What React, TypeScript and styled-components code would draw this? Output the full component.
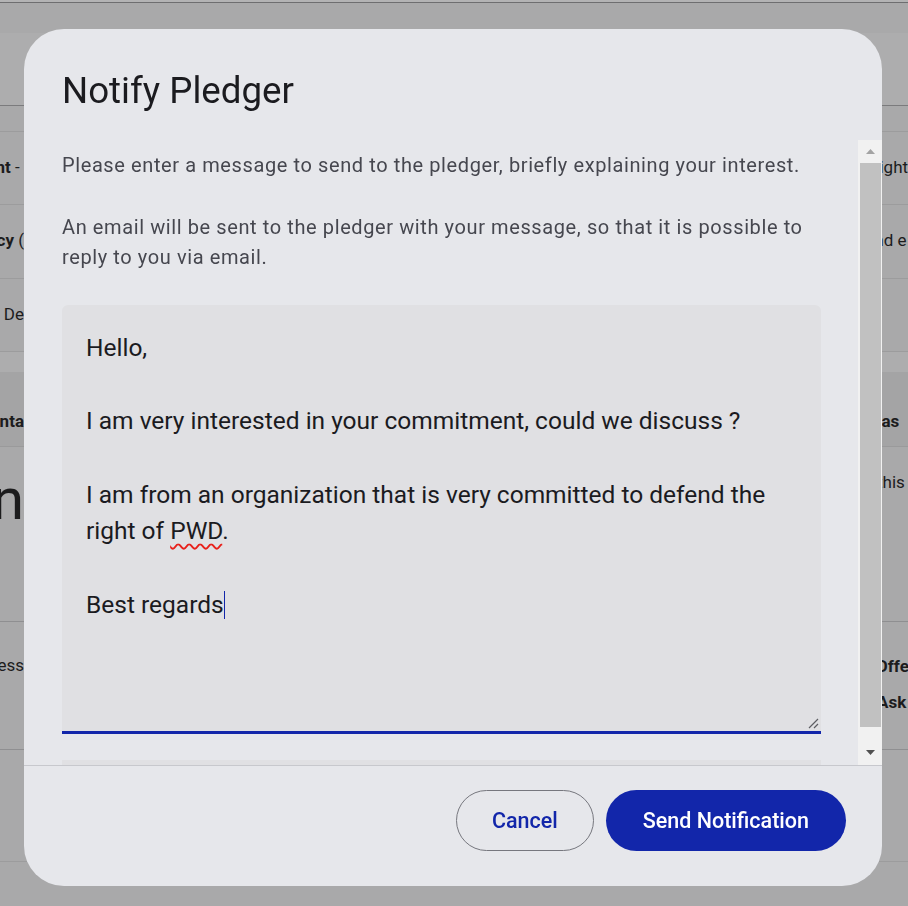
import styled, { createGlobalStyle } from 'styled-components';

const GlobalStyle = createGlobalStyle`
  html, body {
    margin: 0;
    padding: 0;
    background: #a9a9aa;
    font-family: Roboto, "Liberation Sans", sans-serif;
    overflow: hidden;
  }
`;

// ---- page behind the dialog (dimmed) ----

const Page = styled.div`
  width: 908px;
  height: 906px;
  display: flex;
  flex-direction: column;
  background: #a9a9aa;
  color: #1c1c1d;
`;

const TopLine = styled.div`
  height: 2px;
  background: #b3b3b4;
  border-bottom: 1px solid #6e6e70;
`;

const Band = styled.div<{ h: number; bg?: string; line?: string }>`
  height: ${(p) => p.h}px;
  flex: none;
  background: ${(p) => p.bg || 'transparent'};
  border-bottom: ${(p) => (p.line ? `1px solid ${p.line}` : 'none')};
  display: grid;
  grid-template-columns: 24px 1fr 40px;
`;

const LeftCell = styled.div<{ top: number }>`
  display: flex;
  justify-content: flex-end;
  overflow: hidden;
  white-space: nowrap;
  padding-top: ${(p) => p.top}px;
`;

const RightCell = styled.div<{ top: number }>`
  display: flex;
  flex-direction: column;
  overflow: hidden;
  white-space: nowrap;
  padding-top: ${(p) => p.top}px;
  gap: 14px;
`;

const CellText = styled.span<{ bold?: boolean; size?: number; shift?: number }>`
  font-size: ${(p) => p.size || 17}px;
  line-height: 22px;
  font-weight: ${(p) => (p.bold ? 700 : 400)};
  margin-left: ${(p) => p.shift || 0}px;
`;

// ---- dialog ----

const Overlay = styled.div`
  position: fixed;
  inset: 0;
  padding: 29px 0 0 24px;
`;

const Modal = styled.div`
  width: 858px;
  height: 857px;
  background: #e6e7eb;
  border-radius: 40px;
  display: flex;
  flex-direction: column;
  overflow: hidden;
`;

const Header = styled.div`
  height: 111px;
  flex: none;
  box-sizing: border-box;
  padding: 40px 38px 0;
`;

const Title = styled.h2`
  margin: 0;
  font-size: 36.7px;
  line-height: 44px;
  font-weight: 400;
  color: #1b1b1f;
`;

const Body = styled.div`
  height: 625px;
  flex: none;
  display: flex;
`;

const Content = styled.div`
  flex: 1;
  overflow: hidden;
  padding: 10px 37px 0 38px;
`;

const Paragraph = styled.p`
  margin: 0 0 32px;
  font-size: 20px;
  line-height: 30px;
  letter-spacing: 0.6px;
  color: #46474f;
`;

const MessageBox = styled.div`
  box-sizing: border-box;
  margin-top: 33px;
  height: 429px;
  background: #e0e0e3;
  border-radius: 6px 6px 0 0;
  border-bottom: 3px solid #1226aa;
  padding: 25px 25px 0 24px;
  position: relative;
  font-size: 24.5px;
  line-height: 36.7px;
  color: #1b1b1f;
`;

const MessageLine = styled.div`
  min-height: 36.7px;
  white-space: nowrap;
`;

const Misspelled = styled.span`
  text-decoration: underline wavy #e8201a;
  text-decoration-thickness: 1.5px;
  text-underline-offset: 4px;
`;

const Caret = styled.span`
  display: inline-block;
  width: 1px;
  height: 28px;
  vertical-align: -6px;
  background: #1226aa;
`;

const Grip = styled.svg`
  position: absolute;
  right: 2px;
  bottom: 2px;
`;

const NextField = styled.div`
  margin-top: 26px;
  height: 40px;
  background: #e0e0e3;
`;

const Scrollbar = styled.div`
  width: 24px;
  flex: none;
  background: #f1f1f1;
  display: flex;
  flex-direction: column;
`;

const ScrollArrow = styled.div<{ h: number }>`
  height: ${(p) => p.h}px;
  flex: none;
  display: flex;
  align-items: center;
  justify-content: center;
`;

const Track = styled.div`
  flex: 1;
  display: flex;
  padding: 0 1px 13px 2px;
`;

const Thumb = styled.div`
  flex: 1;
  background: #c1c1c1;
`;

const Footer = styled.div`
  flex: 1;
  border-top: 1px solid #c7c8cd;
  display: flex;
  justify-content: flex-end;
  align-items: flex-start;
  gap: 12px;
  padding: 24px 36px 0 0;
`;

const Button = styled.button<{ primary?: boolean }>`
  height: 61px;
  border-radius: 31px;
  font-family: Roboto, "Liberation Sans", sans-serif;
  font-size: 21.5px;
  font-weight: 500;
  cursor: pointer;
  padding: 0 ${(p) => (p.primary ? 37 : 35)}px;
  background: ${(p) => (p.primary ? '#1226aa' : 'transparent')};
  color: ${(p) => (p.primary ? '#ffffff' : '#1226aa')};
  border: ${(p) => (p.primary ? 'none' : '1px solid #76777e')};
`;

export default function App() {
  return (
    <>
      <GlobalStyle />
      <Page>
        <TopLine />
        <Band h={30} bg="#a9a9aa" />
        <Band h={72} bg="#adadae" line="#7b7b7d" />
        <Band h={25} line="#9c9c9d" />
        <Band h={72} line="#9c9c9d">
          <LeftCell top={24}>
            <CellText bold>Amount</CellText>
            <CellText>&nbsp;-&nbsp;</CellText>
          </LeftCell>
          <div />
          <RightCell top={24}>
            <CellText shift={1}>Right</CellText>
          </RightCell>
        </Band>
        <Band h={73} line="#9c9c9d">
          <LeftCell top={24}>
            <CellText bold>Currency</CellText>
            <CellText>&nbsp;(</CellText>
          </LeftCell>
          <div />
          <RightCell top={24}>
            <CellText shift={-3}>and e</CellText>
          </RightCell>
        </Band>
        <Band h={72} line="#9c9c9d">
          <LeftCell top={24}>
            <CellText>&nbsp;De</CellText>
          </LeftCell>
        </Band>
        <Band h={20} bg="#adadae" />
        <Band h={74} bg="#a4a4a5" line="#9a9a9b">
          <LeftCell top={38}>
            <CellText bold>Conta</CellText>
          </LeftCell>
          <div />
          <RightCell top={38}>
            <CellText bold shift={-7}>Phas</CellText>
          </RightCell>
        </Band>
        <Band h={174} line="#8f8f91">
          <LeftCell top={22}>
            <CellText size={58} style={{ lineHeight: '60px' }}>
              n
            </CellText>
          </LeftCell>
          <div />
          <RightCell top={24}>
            <CellText shift={9}>this</CellText>
          </RightCell>
        </Band>
        <Band h={127} line="#8f8f91">
          <LeftCell top={32}>
            <CellText>Access</CellText>
          </LeftCell>
          <div />
          <RightCell top={33}>
            <CellText bold shift={8}>Offer</CellText>
            <CellText bold shift={9}>Ask</CellText>
          </RightCell>
        </Band>
        <Band h={111} line="#9c9c9d" />
      </Page>

      <Overlay>
        <Modal role="dialog">
          <Header>
            <Title>Notify Pledger</Title>
          </Header>
          <Body>
            <Content>
              <Paragraph>
                Please enter a message to send to the pledger, briefly explaining your interest.
              </Paragraph>
              <Paragraph>
                An email will be sent to the pledger with your message, so that it is possible to
                reply to you via email.
              </Paragraph>
              <MessageBox>
                <MessageLine>Hello,</MessageLine>
                <MessageLine />
                <MessageLine>I am very interested in your commitment, could we discuss ?</MessageLine>
                <MessageLine />
                <MessageLine>I am from an organization that is very committed to defend the</MessageLine>
                <MessageLine>
                  right of <Misspelled>PWD</Misspelled>.
                </MessageLine>
                <MessageLine />
                <MessageLine>
                  Best regards
                  <Caret />
                </MessageLine>
                <Grip width="12" height="12" viewBox="0 0 12 12">
                  <path d="M11 2 L2 11 M11 7 L7 11" stroke="#5d5e63" strokeWidth="1.2" />
                </Grip>
              </MessageBox>
              <NextField />
            </Content>
            <Scrollbar>
              <ScrollArrow h={23}>
                <svg width="9" height="5" viewBox="0 0 9 5">
                  <path d="M0 5 L4.5 0 L9 5 Z" fill="#a3a3a3" />
                </svg>
              </ScrollArrow>
              <Track>
                <Thumb />
              </Track>
              <ScrollArrow h={25}>
                <svg width="9" height="5" viewBox="0 0 9 5">
                  <path d="M0 0 L4.5 5 L9 0 Z" fill="#505050" />
                </svg>
              </ScrollArrow>
            </Scrollbar>
          </Body>
          <Footer>
            <Button>Cancel</Button>
            <Button primary>Send Notification</Button>
          </Footer>
        </Modal>
      </Overlay>
    </>
  );
}
